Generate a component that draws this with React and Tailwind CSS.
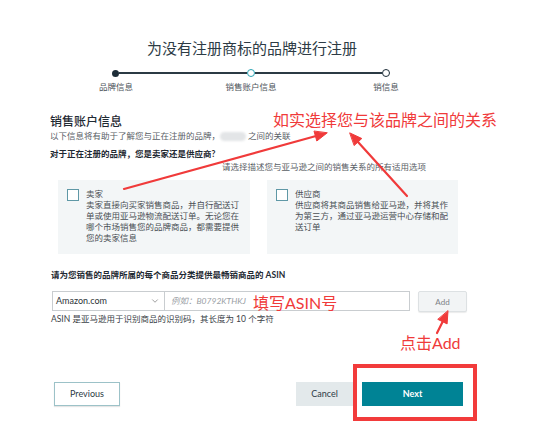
import { ChevronDown } from "lucide-react";

const cjk = { fontFamily: '"Lato", "Noto Sans CJK SC", sans-serif' };

const Step = ({ type }) => {
  if (type === "done") return <span className="w-[7px] h-[7px] rounded-full bg-[#1d2d38] shrink-0" />;
  if (type === "current") return <span className="w-[8px] h-[8px] rounded-full border-[1.5px] border-[#2aa3b3] bg-white shrink-0" />;
  return <span className="w-[8px] h-[8px] rounded-full border-[1.5px] border-[#1d2d38] bg-white shrink-0" />;
};

const RoleCard = ({ title, lines }) => (
  <div className="flex h-[74px] bg-[#f3f6f7] pl-[9px] pt-[9px]">
    <span className="w-[12px] h-[12px] border border-[#5f98a6] bg-white shrink-0" />
    <div className="ml-[7px] w-[160px] text-[8.5px] leading-[11px] text-[#4a4f55]">
      <div>{title}</div>
      {lines.map((l) => (
        <div key={l}>{l}</div>
      ))}
    </div>
  </div>
);

export default function App() {
  return (
    <div className="relative w-[537px] h-[447px] bg-white overflow-hidden" style={cjk}>
      <div className="ml-[50px] w-[420px] flex flex-col">
        {/* Header */}
        <h1 className="mt-[38px] w-[404px] text-center text-[15px] leading-[20px] text-[#2d3b45]">
          为没有注册商标的品牌进行注册
        </h1>

        {/* Stepper */}
        <div className="ml-[36px] w-[330px]">
          <div className="mt-[11px] flex items-center px-[26px] h-[8px]">
            <Step type="done" />
            <span className="flex-1 h-[2px] bg-[#2b3a44]" />
            <Step type="current" />
            <span className="flex-1 h-[2px] bg-[#2b3a44]" />
            <Step type="todo" />
          </div>
          <div className="mt-[5px] flex justify-between text-[8.5px] leading-[10px] text-[#4d545a]">
            <span className="w-[60px] text-center">品牌信息</span>
            <span className="w-[60px] text-center">销售账户信息</span>
            <span className="w-[60px] text-center">销信息</span>
          </div>
        </div>

        {/* Sales account info */}
        <h2 className="mt-[22px] text-[12px] leading-[16px] font-medium text-[#1f2a33]">销售账户信息</h2>
        <p className="text-[8.5px] leading-[12px] text-[#5a6066] flex items-center">
          以下信息将有助于了解您与正在注册的品牌，
          <span className="inline-block w-[26px] h-[9px] rounded-full bg-[#e3e5e7] blur-[1px]" />
          <span className="ml-[2px]">之间的关联</span>
        </p>
        <p className="mt-[6px] text-[8.5px] leading-[12px] font-bold text-[#1f2a33]">
          对于正在注册的品牌，您是卖家还是供应商?
        </p>
        <p className="mt-[1px] ml-[172px] text-[8.5px] leading-[12px] text-[#5a6066] whitespace-nowrap">
          请选择描述您与亚马逊之间的销售关系的所有适用选项
        </p>

        <div className="mt-[7px] ml-[8px] grid grid-cols-[192px_191px] gap-[17px]">
          <RoleCard
            title="卖家"
            lines={[
              "卖家直接向买家销售商品，并自行配送订",
              "单或使用亚马逊物流配送订单。无论您在",
              "哪个市场销售您的品牌商品，都需要提供",
              "您的卖家信息",
            ]}
          />
          <RoleCard
            title="供应商"
            lines={[
              "供应商将其商品销售给亚马逊，并将其作",
              "为第三方，通过亚马逊运营中心存储和配",
              "送订单",
            ]}
          />
        </div>

        {/* ASIN */}
        <p className="mt-[15px] ml-[1px] text-[8.5px] leading-[12px] font-bold text-[#1f2a33]">
          请为您销售的品牌所属的每个商品分类提供最畅销商品的 ASIN
        </p>
        <div className="mt-[10px] ml-[2px] flex items-start">
          <div className="w-[113px] h-[20px] border border-[#c9cdd0] bg-white flex items-center justify-between pl-[3px] pr-[4px]">
            <span className="text-[9px] text-[#2d3338]">Amazon.com</span>
            <ChevronDown size={10} strokeWidth={1.5} className="text-[#666]" />
          </div>
          <div className="w-[245px] h-[20px] border border-l-0 border-[#c9cdd0] bg-white flex items-center pl-[6px]">
            <span className="text-[8.5px] italic text-[#9aa0a5]">例如：B0792KTHKJ</span>
          </div>
          <button className="ml-[8px] w-[49px] h-[21px] rounded-[2px] border border-[#dde1e3] bg-[#f2f4f5] text-[8px] text-[#7d8387] shadow-[0_1px_1px_rgba(0,0,0,0.08)]">
            Add
          </button>
        </div>
        <p className="mt-[1px] ml-[1px] text-[8.5px] leading-[12px] text-[#3b4248]">
          ASIN 是亚马逊用于识别商品的识别码，其长度为 10 个字符
        </p>

        {/* Footer */}
        <div className="mt-[57px] flex items-center">
          <button className="ml-[4px] w-[66px] h-[24px] border border-[#9cc2c8] bg-white text-[9px] text-[#2d3b45] shadow-[0_1px_1px_rgba(0,0,0,0.1)]">
            Previous
          </button>
          <button className="ml-auto w-[57px] h-[24px] bg-[#e3e9eb] text-[9px] text-[#2d3b45]">
            Cancel
          </button>
          <button className="ml-[9px] mr-[7px] w-[101px] h-[24px] bg-[#008395] text-[9px] font-bold text-white">
            Next
          </button>
        </div>
      </div>

      {/* Annotations */}
      <span className="absolute left-[273px] top-[110px] text-[16px] leading-[20px] text-[#f03a3a] whitespace-nowrap">
        如实选择您与该品牌之间的关系
      </span>
      <span className="absolute left-[253px] top-[293px] text-[16px] leading-[20px] text-[#f03a3a] whitespace-nowrap">
        填写ASIN号
      </span>
      <span className="absolute left-[400px] top-[333px] text-[16px] leading-[20px] text-[#f03a3a] whitespace-nowrap">
        点击Add
      </span>
      <div className="absolute left-[353px] top-[364px] w-[124px] h-[57px] border-[4px] border-[#f23b3b]" />

      <svg className="absolute inset-0 pointer-events-none" width="537" height="447">
        <g fill="#f03a3a" stroke="#f03a3a" strokeLinecap="round">
          <line x1="124" y1="189" x2="316" y2="136" strokeWidth="2.2" />
          <polygon points="327,133 316.8,141 314.1,131.4" />
          <line x1="407" y1="196" x2="358" y2="142" strokeWidth="2.2" />
          <polygon points="350,133 361.8,138.5 354.4,145.3" />
          <line x1="437" y1="333" x2="443" y2="321" strokeWidth="2.2" />
          <polygon points="448,311 447.1,323.9 438.1,319.5" />
        </g>
      </svg>
    </div>
  );
}
